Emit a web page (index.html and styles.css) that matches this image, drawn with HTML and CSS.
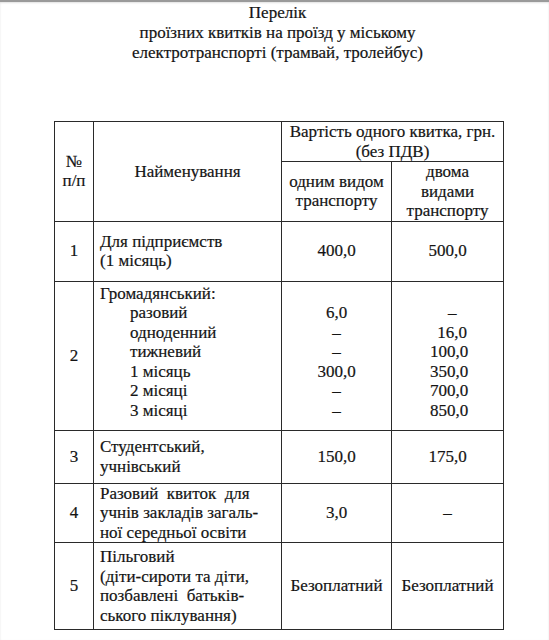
FILE: index.html
```html
<!DOCTYPE html>
<html lang="uk">
<head>
<meta charset="utf-8">
<title>Перелік проїзних квитків</title>
<link rel="stylesheet" href="styles.css">
</head>
<body>
<div class="page">
  <div class="title">
    <div>Перелік</div>
    <div>проїзних квитків на проїзд у міському</div>
    <div>електротранспорті (трамвай, тролейбус)</div>
  </div>
  <table class="tickets">
    <colgroup>
      <col class="c-num">
      <col class="c-name">
      <col class="c-one">
      <col class="c-two">
    </colgroup>
    <tr class="h1">
      <td rowspan="2" class="center">№<br>п/п</td>
      <td rowspan="2" class="center">Найменування</td>
      <td colspan="2" class="center">Вартість одного квитка, грн.<br>(без ПДВ)</td>
    </tr>
    <tr class="h2">
      <td class="center">одним видом<br>транспорту</td>
      <td class="center">двома<br>видами<br>транспорту</td>
    </tr>
    <tr class="r1">
      <td class="center">1</td>
      <td class="name">Для підприємств<br>(1 місяць)</td>
      <td class="center">400,0</td>
      <td class="center">500,0</td>
    </tr>
    <tr class="r2">
      <td class="center">2</td>
      <td class="name top">
        <div>Громадянський:</div>
        <div class="indent">разовий</div>
        <div class="indent">одноденний</div>
        <div class="indent">тижневий</div>
        <div class="indent">1 місяць</div>
        <div class="indent">2 місяці</div>
        <div class="indent">3 місяці</div>
      </td>
      <td class="center top">
        <div>&nbsp;</div>
        <div>6,0</div>
        <div>–</div>
        <div>–</div>
        <div>300,0</div>
        <div>–</div>
        <div>–</div>
      </td>
      <td class="top vals-cell">
        <div class="vals">
          <div>&nbsp;</div>
          <div class="dash">–</div>
          <div>16,0</div>
          <div>100,0</div>
          <div>350,0</div>
          <div>700,0</div>
          <div>850,0</div>
        </div>
      </td>
    </tr>
    <tr class="r3">
      <td class="center">3</td>
      <td class="name">Студентський,<br>учнівський</td>
      <td class="center">150,0</td>
      <td class="center">175,0</td>
    </tr>
    <tr class="r4">
      <td class="center">4</td>
      <td class="name">Разовий&nbsp; квиток&nbsp; для<br>учнів закладів загаль-<br>ної середньої освіти</td>
      <td class="center">3,0</td>
      <td class="center">–</td>
    </tr>
    <tr class="r5">
      <td class="center">5</td>
      <td class="name">Пільговий<br>(діти-сироти та діти,<br>позбавлені&nbsp; батьків-<br>ського піклування)</td>
      <td class="center">Безоплатний</td>
      <td class="center">Безоплатний</td>
    </tr>
  </table>
</div>
</body>
</html>
```

FILE: styles.css
```css
html, body {
  margin: 0;
  padding: 0;
  background: #ffffff;
}

body,
.title,
.tickets,
.tickets td {
  font-family: "Liberation Serif", Tinos, "Times New Roman", "DejaVu Serif", serif;
}

body {
  font-size: 17px;
  color: #141414;
  -webkit-text-stroke: 0.2px #141414;
}

.page {
  border-top: 2px solid #9a9a9a;
  box-shadow: inset 0 1px 2px rgba(0, 0, 0, 0.12);
  min-height: 638px;
}

.title {
  text-align: center;
  line-height: 20px;
  padding: 1px 0 0 6px;
  margin-bottom: 58px;
}

.tickets {
  border-collapse: collapse;
  table-layout: fixed;
  width: 450px;
  margin-left: 54px;
  line-height: 19.5px;
  font-size: 17px;
}

.c-num { width: 39px; }
.c-name { width: 188px; }
.c-one { width: 110px; }
.c-two { width: 112px; }

.tickets td {
  border: 1px solid #2a2a2a;
  padding: 0;
  vertical-align: middle;
}

.center { text-align: center; }

.name {
  text-align: left;
  padding-left: 6px !important;
}

.top {
  vertical-align: top !important;
  padding-top: 2px !important;
}

.indent { padding-left: 30px; }

.vals-cell {
  text-align: left;
  padding-left: 38px !important;
}

.vals {
  width: 37px;
  text-align: right;
}

.vals .dash {
  text-align: left;
  padding-left: 18px;
}

.h1 td { height: 39px; }
.h2 td { height: 58px; }
.r1 td { height: 59px; }
.r2 td { height: 146px; }
.r3 td { height: 52px; }
.r4 td { height: 58px; }
.r5 td { height: 86px; }
```
